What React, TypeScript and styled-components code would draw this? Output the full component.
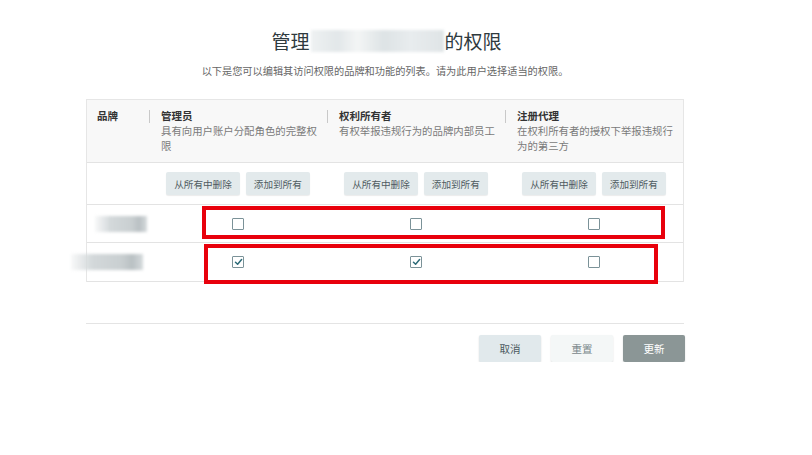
import React from 'react';
import styled, { createGlobalStyle } from 'styled-components';

const Global = createGlobalStyle`
  html, body { margin: 0; padding: 0; background: #fff; }
  body { font-family: "Noto Sans CJK SC", "Noto Sans", sans-serif; color: #333; }
  * { box-sizing: border-box; }
`;

const Page = styled.div`
  width: 598px;
  margin-left: 86px;
  padding-top: 27px;
`;

const Title = styled.h1`
  margin: 0;
  padding-left: 3px;
  font-size: 19px;
  font-weight: 400;
  line-height: 28px;
  color: #2f3a3e;
  text-align: center;
  display: flex;
  justify-content: center;
  align-items: center;
`;

const BlurredName = styled.span<{ $w: number }>`
  display: inline-block;
  width: ${p => p.$w}px;
  height: 22px;
  margin: 0 1px;
  background: linear-gradient(90deg, #eef1f2 0%, #e2e7e9 20%, #f3f5f5 35%, #dde3e5 55%, #e8ecee 75%, #dfe4e6 100%);
  filter: blur(1.5px);
`;

const Subtitle = styled.p`
  margin: 8px 0 0;
  font-size: 10.2px;
  line-height: 16px;
  color: #666;
  text-align: center;
`;

const Table = styled.div`
  margin-top: 20px;
  border: 1px solid #e6e6e6;
  border-bottom: none;
`;

const Row = styled.div<{ $h: number; $bg?: string }>`
  position: relative;
  display: grid;
  grid-template-columns: 62px 178px 178px 1fr;
  height: ${p => p.$h}px;
  background: ${p => p.$bg || '#fff'};
  border-bottom: 1px solid #e3e3e3;
`;

const HeadCell = styled.div<{ $sep?: boolean }>`
  position: relative;
  padding: 8px 10px 0 ${p => (p.$sep ? 12 : 10)}px;
  line-height: 15px;
  &::before {
    content: '';
    display: ${p => (p.$sep ? 'block' : 'none')};
    position: absolute;
    left: 0;
    top: 10px;
    width: 1px;
    height: 13px;
    background: #c9c9c9;
  }
`;

const HeadTitle = styled.div`
  font-size: 10.5px;
  font-weight: 700;
  color: #333;
`;

const HeadDesc = styled.div`
  font-size: 10.4px;
  color: #7a7a7a;
`;

const Cell = styled.div`
  display: flex;
  align-items: center;
  justify-content: center;
  gap: 6px;
`;

const BrandCell = styled.div`
  display: flex;
  align-items: center;
  padding-left: 8px;
`;

const SmallButton = styled.button`
  height: 23px;
  padding: 0 8px;
  border: none;
  border-radius: 2px;
  background: #e3eaec;
  color: #4f5b60;
  font-family: inherit;
  font-size: 9.6px;
  box-shadow: 0 1px 1px rgba(0, 0, 0, 0.08);
`;

const Box = styled.span`
  width: 12px;
  height: 12px;
  border: 1px solid #7b9298;
  border-radius: 1px;
  background: #fff;
  display: flex;
  align-items: center;
  justify-content: center;
`;

const BlurBrand = styled.div<{ $w: number; $shift: number }>`
  width: ${p => p.$w}px;
  height: 16px;
  margin-left: ${p => p.$shift}px;
  background: linear-gradient(90deg, rgba(220,224,226,0.2) 0%, #d3d8da 30%, #c9cfd1 70%, #b9c0c3 85%, #d6dbdd 100%);
  filter: blur(1.6px);
`;

const Highlight = styled.div<{ $top: number; $left: number; $w: number; $h: number }>`
  position: absolute;
  top: ${p => p.$top}px;
  left: ${p => p.$left}px;
  width: ${p => p.$w}px;
  height: ${p => p.$h}px;
  border: 4px solid #e8000c;
  pointer-events: none;
`;

const Divider = styled.hr`
  margin: 41px 0 0;
  border: none;
  border-top: 1px solid #e4e4e4;
`;

const Footer = styled.div`
  display: flex;
  justify-content: flex-end;
  gap: 10px;
  margin-top: 11px;
  margin-right: -1px;
`;

const FooterButton = styled.button<{ $variant: 'cancel' | 'reset' | 'primary' }>`
  width: 62px;
  height: 27px;
  border: none;
  border-radius: 2px;
  font-family: inherit;
  font-size: 10.5px;
  background: ${p => (p.$variant === 'cancel' ? '#e1e9ec' : p.$variant === 'reset' ? '#f4f7f7' : '#8b9696')};
  color: ${p => (p.$variant === 'primary' ? '#fff' : p.$variant === 'reset' ? '#7a878b' : '#4b5a60')};
  box-shadow: 0 1px 2px rgba(0, 0, 0, 0.14);
`;

const Check = ({ checked }: { checked?: boolean }) => (
  <Box>
    {checked && (
      <svg width="9" height="8" viewBox="0 0 9 8">
        <path d="M1.5 4.2 L3.6 6.2 L7.6 1.5" fill="none" stroke="#2d6b78" strokeWidth="1.5" strokeLinecap="round" strokeLinejoin="round" />
      </svg>
    )}
  </Box>
);

const columns = [
  { title: '管理员', desc: '具有向用户账户分配角色的完整权限' },
  { title: '权利所有者', desc: '有权举报违规行为的品牌内部员工' },
  { title: '注册代理', desc: '在权利所有者的授权下举报违规行为的第三方' },
];

const rows = [
  { values: [false, false, false], blur: { w: 52, shift: 0 }, hl: { top: 1, left: 115, w: 463, h: 33 } },
  { values: [true, true, false], blur: { w: 72, shift: -24 }, hl: { top: 1, left: 117, w: 454, h: 40 } },
];

export default function App() {
  return (
    <>
      <Global />
      <Page>
        <Title>
          管理<BlurredName $w={133} />的权限
        </Title>
        <Subtitle>以下是您可以编辑其访问权限的品牌和功能的列表。请为此用户选择适当的权限。</Subtitle>
        <Table>
          <Row $h={63} $bg="#f8f8f8">
            <HeadCell>
              <HeadTitle>品牌</HeadTitle>
            </HeadCell>
            {columns.map(c => (
              <HeadCell $sep key={c.title}>
                <HeadTitle>{c.title}</HeadTitle>
                <HeadDesc>{c.desc}</HeadDesc>
              </HeadCell>
            ))}
          </Row>
          <Row $h={42}>
            <div />
            {columns.map(c => (
              <Cell key={c.title}>
                <SmallButton>从所有中删除</SmallButton>
                <SmallButton>添加到所有</SmallButton>
              </Cell>
            ))}
          </Row>
          {rows.map((r, i) => (
            <Row $h={i === 0 ? 38 : 39} key={i}>
              <BrandCell>
                <BlurBrand $w={r.blur.w} $shift={r.blur.shift} />
              </BrandCell>
              {r.values.map((v, j) => (
                <Cell key={j}>
                  <Check checked={v} />
                </Cell>
              ))}
              <Highlight $top={r.hl.top} $left={r.hl.left} $w={r.hl.w} $h={r.hl.h} />
            </Row>
          ))}
        </Table>
        <Divider />
        <Footer>
          <FooterButton $variant="cancel">取消</FooterButton>
          <FooterButton $variant="reset">重置</FooterButton>
          <FooterButton $variant="primary">更新</FooterButton>
        </Footer>
      </Page>
    </>
  );
}
